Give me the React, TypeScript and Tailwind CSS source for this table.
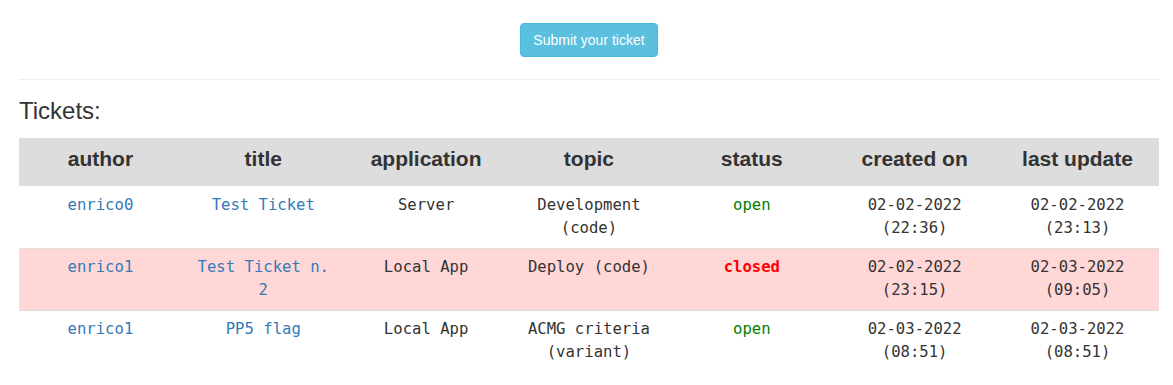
import React from "react";

type Row = {
  author: string;
  title: string;
  app: string;
  topic: string;
  status: "open" | "closed";
  created: [string, string];
  updated: [string, string];
};

const rows: Row[] = [
  {
    author: "enrico0",
    title: "Test Ticket",
    app: "Server",
    topic: "Development (code)",
    status: "open",
    created: ["02-02-2022", "(22:36)"],
    updated: ["02-02-2022", "(23:13)"],
  },
  {
    author: "enrico1",
    title: "Test Ticket n. 2",
    app: "Local App",
    topic: "Deploy (code)",
    status: "closed",
    created: ["02-02-2022", "(23:15)"],
    updated: ["02-03-2022", "(09:05)"],
  },
  {
    author: "enrico1",
    title: "PP5 flag",
    app: "Local App",
    topic: "ACMG criteria (variant)",
    status: "open",
    created: ["02-03-2022", "(08:51)"],
    updated: ["02-03-2022", "(08:51)"],
  },
];

const headers = ["author", "title", "application", "topic", "status", "created on", "last update"];

export default function App() {
  return (
    <div
      className="min-h-[385px] w-full bg-white pl-[19px] pr-[14px] pt-[23px] text-[#333]"
      style={{ fontFamily: '"Liberation Sans", Arial, sans-serif' }}
    >
      <div className="flex justify-center">
        <button className="h-[34px] rounded-[4px] border border-[#46b8da] bg-[#5bc0de] px-[12px] text-[14px] leading-[20px] text-white">
          Submit your ticket
        </button>
      </div>
      <div className="mt-[22px] border-t border-[#eee]" />
      <h2 className="mt-[18px] text-[24px] font-normal leading-[26.4px]">Tickets:</h2>
      <table className="mt-[13.6px] w-full table-fixed border-collapse">
        <thead>
          <tr className="h-[48px] bg-[#ddd]">
            {headers.map((h) => (
              <th key={h} className="pb-[7px] align-middle text-center text-[21px] font-bold leading-[24px] text-[#333]">
                {h}
              </th>
            ))}
          </tr>
        </thead>
        <tbody style={{ fontFamily: '"DejaVu Sans Mono", monospace' }} className="text-[15.6px] leading-[23px]">
          {rows.map((r, i) => {
            const pad = i === 0 ? "pt-[8px]" : "pt-[7px]";
            return (
              <tr
                key={i}
                className={`h-[62px] align-top ${i === 0 ? "" : "border-t border-[#ddd]"} ${
                  r.status === "closed" ? "bg-[#ffd7d7]" : "bg-white"
                }`}
              >
                <td className={`px-[8px] text-center text-[#337ab7] ${pad}`}>{r.author}</td>
                <td className={`px-[8px] text-center text-[#337ab7] ${pad}`}>{r.title}</td>
                <td className={`px-[8px] text-center ${pad}`}>{r.app}</td>
                <td className={`px-[8px] text-center ${pad}`}>{r.topic}</td>
                <td
                  className={`px-[8px] text-center ${pad} ${
                    r.status === "closed" ? "font-bold text-[#ff0000]" : "text-[#008000]"
                  }`}
                >
                  {r.status}
                </td>
                <td className={`px-[8px] text-center ${pad}`}>
                  {r.created[0]}
                  <br />
                  {r.created[1]}
                </td>
                <td className={`px-[8px] text-center ${pad}`}>
                  {r.updated[0]}
                  <br />
                  {r.updated[1]}
                </td>
              </tr>
            );
          })}
        </tbody>
      </table>
    </div>
  );
}
